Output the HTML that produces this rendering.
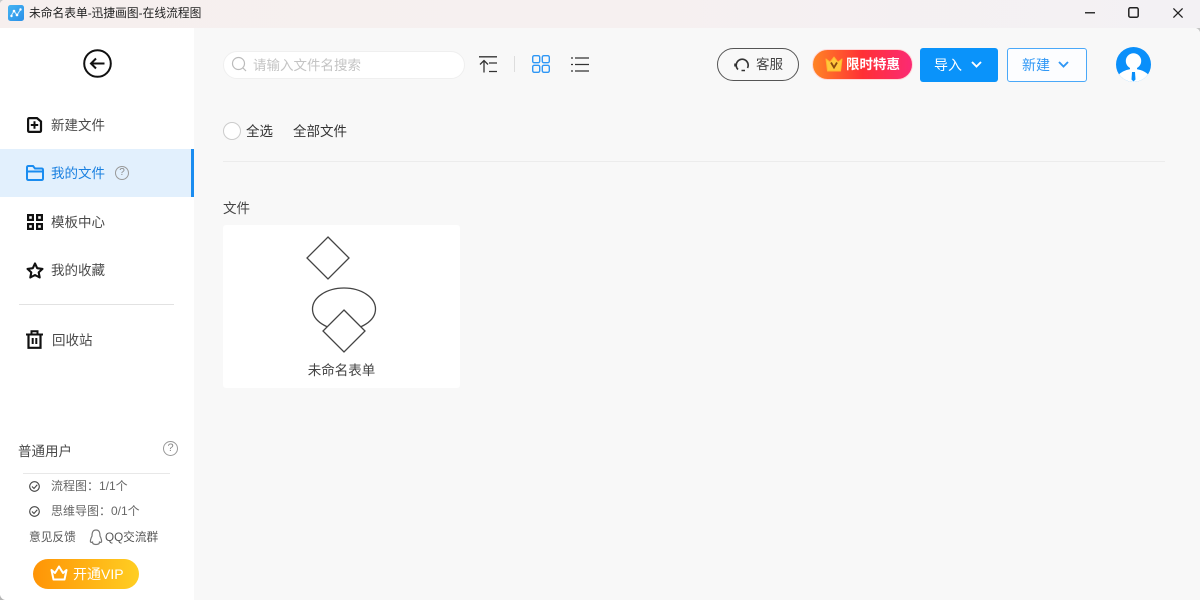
<!DOCTYPE html>
<html><head><meta charset="utf-8"><style>
*{box-sizing:border-box}
html,body{margin:0;padding:0;width:1200px;height:600px;overflow:hidden;background:#f8f8f8;font-family:"Liberation Sans","Noto Sans CJK SC",sans-serif;color:#333}
.a{position:absolute;white-space:nowrap}
svg{position:absolute;overflow:visible}
.t{font-size:13.5px;line-height:18px;color:#4a4a4a}
</style></head><body>
<div class="a" style="left:0;top:0;width:1200px;height:28px;background:linear-gradient(90deg,#f6efee 0%,#f6f0f0 50%,#f3f1f4 100%)"></div>
<div class="a" style="left:0;top:28px;width:194px;height:572px;background:#fff"></div>
<svg style="left:0;top:594px" width="6" height="6"><path d="M0 1Q1 5 5 6H0Z" fill="#b5b5b5"/></svg>
<svg style="left:1195px;top:28px" width="5" height="5"><path d="M1 0H5V4Q4 1 1 0Z" fill="#c4c4c4"/></svg>
<svg style="left:0;top:0" width="4" height="4"><path d="M0 0H3Q1 1 0 3Z" fill="#c8c8c8"/></svg>

<svg style="left:8px;top:5px" width="16" height="16" viewBox="0 0 16 16"><defs><linearGradient id="g" x1="0" y1="0" x2="1" y2="1"><stop offset="0" stop-color="#45b4f2"/><stop offset="1" stop-color="#2a8fe8"/></linearGradient></defs><rect width="16" height="16" rx="2.500" fill="url(#g)"/><path d="M3 11L6 6L9 10L12.500 4.500" fill="none" stroke="#cfeaff" stroke-width="1.100"/><circle cx="3.500" cy="11" r="1.200" fill="#fff"/><circle cx="6" cy="6" r="1.300" fill="#fff"/><circle cx="9" cy="10" r="1.300" fill="#fff"/><circle cx="12.500" cy="4.500" r="1.200" fill="#fff"/></svg>
<div class="a" style="left:29px;top:5px;font-size:11.750px;line-height:18px;color:#222">未命名表单-迅捷画图-在线流程图</div>

<svg style="left:1085px;top:12px" width="10" height="2"><rect width="10" height="1.500" fill="#333"/></svg>
<svg style="left:1128px;top:7px" width="11" height="11"><rect x=".8" y=".8" width="9.400" height="9.400" rx="1.500" fill="none" stroke="#222" stroke-width="1.500"/></svg>
<svg style="left:1173px;top:8px" width="10" height="10"><path d="M.4.4L9.600 9.600M9.600.4L.4 9.600" stroke="#222" stroke-width="1.300"/></svg>

<svg style="left:82.500px;top:48.500px" width="29" height="29" viewBox="0 0 29 29"><circle cx="14.500" cy="14.500" r="13.300" fill="none" stroke="#111" stroke-width="2"/><path d="M21.500 14.500H8M13 9.500L8 14.500L13 19.500" fill="none" stroke="#111" stroke-width="2"/></svg>

<svg style="left:27px;top:117px" width="15" height="16" viewBox="0 0 15 16"><path d="M2.500 1.100H10L14 4.500V13.500Q14 14.900 12.500 14.900H2.500Q1.100 14.900 1.100 13.500V2.500Q1.100 1.100 2.500 1.100Z" fill="none" stroke="#111" stroke-width="2.200"/><path d="M3.800 8H11.200M7.500 4.300V11.700" stroke="#111" stroke-width="2"/></svg>
<div class="a t" style="left:51px;top:117px">新建文件</div>

<div class="a" style="left:0;top:149px;width:194px;height:48px;background:#e2f0fd;border-right:3px solid #1a8cf0"></div>
<svg style="left:26px;top:165px" width="18" height="16" viewBox="0 0 18 16"><path d="M1 2.500Q1 1 2.500 1H7L9 3.500H15.500Q17 3.500 17 5V13.500Q17 15 15.500 15H2.500Q1 15 1 13.500ZM1 6.500H17" fill="none" stroke="#1a8cf0" stroke-width="2"/></svg>
<div class="a t" style="left:51px;top:165px;color:#1a80e0">我的文件</div>
<div class="a" style="left:115px;top:166px;width:14px;height:14px;border:1px solid #999;border-radius:50%;font-size:10px;line-height:12px;text-align:center;color:#888">?</div>

<svg style="left:27px;top:214px" width="16" height="16" viewBox="0 0 16 16" fill="none" stroke="#111" stroke-width="2.200"><rect x="1.100" y="1.100" width="4.800" height="4.800"/><rect x="10.100" y="1.100" width="4.800" height="4.800"/><rect x="1.100" y="10.100" width="4.800" height="4.800"/><rect x="10.100" y="10.100" width="4.800" height="4.800"/></svg>
<div class="a t" style="left:51px;top:214px">模板中心</div>

<svg style="left:26px;top:262px" width="18" height="17" viewBox="0 0 18 17"><path d="M9 1.500L11.200 6.200L16.500 6.900L12.700 10.400L13.700 15.500L9 13L4.300 15.500L5.300 10.400L1.500 6.900L6.800 6.200Z" fill="none" stroke="#111" stroke-width="2.100" stroke-linejoin="round"/></svg>
<div class="a t" style="left:51px;top:262px">我的收藏</div>

<div class="a" style="left:19px;top:304px;width:155px;height:1px;background:#e2e2e2"></div>

<svg style="left:26px;top:330px" width="17" height="19" viewBox="0 0 17 19"><path d="M0 4.500H17M5.500 4V1.200H11.500V4" fill="none" stroke="#111" stroke-width="2"/><path d="M2.500 5V17.800H14.500V5" fill="none" stroke="#111" stroke-width="2.200"/><path d="M6.700 8V14M10.300 8V14" stroke="#111" stroke-width="2"/></svg>
<div class="a t" style="left:52px;top:332px">回收站</div>

<div class="a t" style="left:18px;top:443px">普通用户</div>
<div class="a" style="left:163px;top:441px;width:15px;height:15px;border:1px solid #999;border-radius:50%;font-size:11px;line-height:13px;text-align:center;color:#888">?</div>
<div class="a" style="left:23px;top:473px;width:147px;height:1px;background:#e8e8e8"></div>

<svg style="left:29px;top:481px" width="11" height="11" viewBox="0 0 11 11"><circle cx="5.500" cy="5.500" r="4.800" fill="none" stroke="#444" stroke-width="1.100"/><path d="M3 5.500L5 7.500L8.300 3.800" fill="none" stroke="#444" stroke-width="1.100"/></svg>
<div class="a" style="left:51px;top:477px;font-size:12px;line-height:18px;color:#666">流程图：1/1个</div>
<svg style="left:29px;top:506px" width="11" height="11" viewBox="0 0 11 11"><circle cx="5.500" cy="5.500" r="4.800" fill="none" stroke="#444" stroke-width="1.100"/><path d="M3 5.500L5 7.500L8.300 3.800" fill="none" stroke="#444" stroke-width="1.100"/></svg>
<div class="a" style="left:51px;top:502px;font-size:12px;line-height:18px;color:#666">思维导图：0/1个</div>
<div class="a" style="left:29px;top:529px;font-size:11.700px;line-height:18px;color:#555">意见反馈</div>
<svg style="left:89px;top:529px" width="14" height="17" viewBox="0 0 14 17"><path d="M7 1C3.500 1 3 4 3 7C2 9 1 11 1.500 13C2.500 14 3 13 3.500 13C3.500 15 5 15.500 7 15.500C9 15.500 10.500 15 10.500 13C11 13 11.500 14 12.500 13C13 11 12 9 11 7C11 4 10.500 1 7 1Z" fill="none" stroke="#777" stroke-width="1.200"/></svg>
<div class="a" style="left:105px;top:529px;font-size:11.700px;line-height:18px;color:#555">QQ交流群</div>

<div class="a" style="left:33px;top:559px;width:106px;height:30px;border-radius:15px;background:linear-gradient(90deg,#ff9406,#ffce22)"></div>
<svg style="left:50px;top:565px" width="18" height="16" viewBox="0 0 18 16"><path d="M1.500 5L5 8L9 1.500L13 8L16.500 5L14.500 14.500H3.500Z" fill="none" stroke="#fff" stroke-width="2" stroke-linejoin="round"/></svg>
<div class="a" style="left:73px;top:564px;font-size:14px;line-height:20px;color:#fff">开通VIP</div>

<div class="a" style="left:223px;top:51px;width:242px;height:28px;background:#fff;border:1px solid #efefef;border-radius:14px"></div>
<svg style="left:231px;top:56px" width="16" height="16" viewBox="0 0 16 16"><circle cx="7.500" cy="7.500" r="6" fill="none" stroke="#bbb" stroke-width="1.200"/><path d="M12 12L15 15" stroke="#bbb" stroke-width="1.200"/></svg>
<div class="a" style="left:253px;top:57px;font-size:13.500px;line-height:18px;color:#c4c4c4">请输入文件名搜索</div>

<svg style="left:479px;top:56px" width="19" height="17" viewBox="0 0 19 17" fill="none" stroke="#333" stroke-width="1.300"><path d="M0 .8H18M5 16.500V5M1 8.500L5 4.500L9 8.500M10 7H18M10 15.500H18"/></svg>
<div class="a" style="left:514px;top:56px;width:1px;height:16px;background:#ddd"></div>
<svg style="left:532px;top:55px" width="18" height="18" viewBox="0 0 18 18" fill="none" stroke="#2f97f5" stroke-width="1.400"><rect x=".7" y=".7" width="7" height="7" rx="1.500"/><rect x="10.300" y=".7" width="7" height="7" rx="1.500"/><rect x=".7" y="10.300" width="7" height="7" rx="1.500"/><rect x="10.300" y="10.300" width="7" height="7" rx="1.500"/></svg>
<svg style="left:571px;top:57px" width="18" height="15" viewBox="0 0 18 15" stroke="#333" stroke-width="1.300"><path d="M0 1H2M4 1H18M0 7.500H2M4 7.500H18M0 14H2M4 14H18"/></svg>

<div class="a" style="left:223px;top:122px;width:18px;height:18px;border:1px solid #ccc;border-radius:50%;background:#fff"></div>
<div class="a t" style="left:246px;top:123px;color:#333">全选</div>
<div class="a t" style="left:293px;top:123px;color:#333">全部文件</div>
<div class="a" style="left:223px;top:161px;width:942px;height:1px;background:#ececec"></div>

<div class="a t" style="left:223px;top:200px;color:#444">文件</div>
<div class="a" style="left:223px;top:225px;width:237px;height:163px;background:#fff;border-radius:3px"></div>
<svg style="left:223px;top:225px" width="237" height="163" viewBox="0 0 237 163" fill="#fff" stroke="#444" stroke-width="1.300"><path d="M105 12L126 33L105 54L84 33Z"/><ellipse cx="121" cy="84" rx="31.500" ry="21"/><path d="M121 85L142 106L121 127L100 106Z"/></svg>
<div class="a" style="left:223px;top:362px;width:237px;text-align:center;font-size:13.500px;line-height:18px;color:#444">未命名表单</div>

<div class="a" style="left:717px;top:48px;width:82px;height:33px;border:1.300px solid #555;border-radius:17px"></div>
<svg style="left:734px;top:57px" width="17" height="16" viewBox="0 0 17 16" fill="none" stroke="#333" stroke-width="1.600"><path d="M4 12.500A6 6 0 1 1 13.500 11M1 6.500V9.500M7.500 13.500H11"/></svg>
<div class="a" style="left:756px;top:55px;font-size:13.500px;line-height:19px;color:#444">客服</div>

<div class="a" style="left:812px;top:49px;width:101px;height:31px;border-radius:16px;background:linear-gradient(90deg,#ff8424,#ff3035 50%,#fb2a74);border:1px solid #ffd9d9"></div>
<svg style="left:825px;top:56px" width="18" height="16" viewBox="0 0 18 16"><path d="M1 3L5 6L9 1L13 6L17 3L15.500 15H2.500Z" fill="#ffc83c" stroke="#ffb52c" stroke-linejoin="round"/><path d="M6 6.500L9 11.500L12 6.500" fill="none" stroke="#8a4a10" stroke-width="1.800"/></svg>
<div class="a" style="left:846px;top:55.500px;font-size:13.500px;line-height:18px;color:#fff;font-weight:bold">限时特惠</div>

<div class="a" style="left:920px;top:48px;width:78px;height:34px;border-radius:3px;background:#0a93fa"></div>
<div class="a" style="left:934px;top:56px;font-size:14px;line-height:19px;color:#fff">导入</div>
<svg style="left:971px;top:61px" width="11" height="7" viewBox="0 0 11 7"><path d="M1 1L5.500 5.500L10 1" fill="none" stroke="#fff" stroke-width="1.900"/></svg>

<div class="a" style="left:1007px;top:48px;width:80px;height:34px;border-radius:3px;border:1px solid #4aa8f8;background:#fcfdff"></div>
<div class="a" style="left:1022px;top:56px;font-size:14px;line-height:19px;color:#2f97f5">新建</div>
<svg style="left:1058px;top:61px" width="11" height="7" viewBox="0 0 11 7"><path d="M1 1L5.500 5.500L10 1" fill="none" stroke="#2f97f5" stroke-width="1.900"/></svg>

<svg style="left:1116px;top:47px" width="35" height="35" viewBox="0 0 35 35"><defs><clipPath id="c"><circle cx="17.500" cy="17.500" r="17.500"/></clipPath></defs><circle cx="17.500" cy="17.500" r="17.500" fill="#0a8ffa"/><g clip-path="url(#c)"><ellipse cx="17.500" cy="37" rx="19" ry="15" fill="#fff"/><circle cx="17.500" cy="14" r="7.700" fill="#fff"/><rect x="14" y="18" width="7" height="6" fill="#fff"/><path d="M16 25H19L19.500 32.500L17.500 34.500L15.500 32.500Z" fill="#0a8ffa"/></g></svg>
</body></html>
